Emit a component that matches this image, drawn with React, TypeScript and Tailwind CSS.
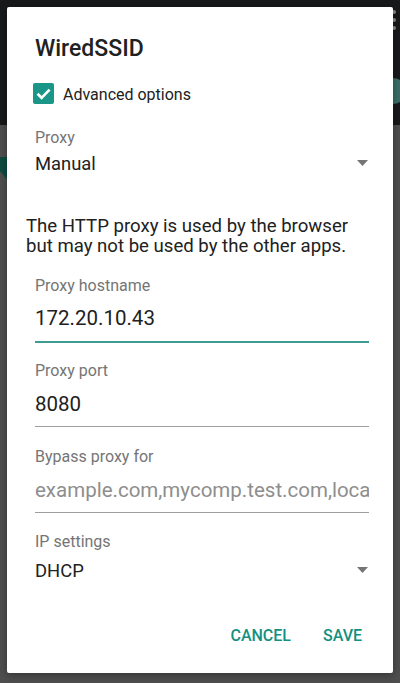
import React from "react";

const Caret = () => (
  <svg width="11" height="6" viewBox="0 0 11 6" className="shrink-0">
    <polygon points="0,0 11,0 5.5,6" fill="#757575" />
  </svg>
);

export default function App() {
  return (
    <div
      className="relative w-[400px] h-[683px] overflow-hidden flex flex-col"
      style={{ fontFamily: "Roboto, 'Noto Sans', sans-serif" }}
    >
      <div className="h-[125px] bg-[#18191b] shrink-0" />
      <div className="flex-1 bg-[#4e4e4e]" />

      {/* background decorations behind the dialog */}
      <div className="absolute left-[392px] top-[10px] flex flex-col gap-[4px]">
        <div className="w-[4px] h-[4px] rounded-full bg-[#8a8a8a]" />
        <div className="w-[4px] h-[4px] rounded-full bg-[#8a8a8a]" />
        <div className="w-[4px] h-[4px] rounded-full bg-[#8a8a8a]" />
      </div>
      <div className="absolute left-[380px] top-[78px] w-[26px] h-[26px] rounded-full bg-[#3b6e67]" />
      <svg className="absolute left-0 top-[155px]" width="10" height="30" viewBox="0 0 10 30">
        <polygon points="0,2 10,2 10,28 0,16" fill="#0e4a40" />
      </svg>

      {/* dialog */}
      <div className="absolute left-[7px] top-[7px] w-[386px] h-[666px] bg-white rounded-[2px] shadow-[0_2px_8px_rgba(0,0,0,0.35)] flex flex-col pl-[28px] pr-[24px] pt-[28px]">
        <div className="text-[23px] leading-[28px] font-medium text-[#212121]">WiredSSID</div>

        <div className="mt-[20px] h-[24px] flex items-start -ml-[2px] gap-[9px]">
          <div className="w-[21px] h-[21px] rounded-[2px] bg-[#1a9688] flex items-center justify-center">
            <svg width="21" height="21" viewBox="0 0 21 21">
              <path d="M4.5 10.8 L8.6 14.8 L16.6 6.6" fill="none" stroke="#ffffff" strokeWidth="2.6" />
            </svg>
          </div>
          <div className="text-[16px] leading-[24px] text-[#212121]">Advanced options</div>
        </div>

        <div className="mt-[21px] text-[16px] leading-[20px] text-[#757575]">Proxy</div>
        <div className="mt-[4px] h-[24px] flex items-center justify-between">
          <span className="text-[18.4px] leading-[24px] text-[#212121]">Manual</span>
          <span className="mr-[1px] -mt-[3px]">
            <Caret />
          </span>
        </div>

        <div className="mt-[41px] -ml-[9px] text-[18.6px] leading-[19.5px] text-[#212121]">
          The HTTP proxy is used by the browser but may not be used by the other apps.
        </div>

        <div className="mt-[20px] text-[16px] leading-[20px] text-[#757575]">Proxy hostname</div>
        <div className="mt-[10px] pb-[11px] border-b-2 border-[#3f9a91] text-[20.5px] leading-[24px] text-[#212121]">
          172.20.10.43
        </div>

        <div className="mt-[18px] text-[16px] leading-[20px] text-[#757575]">Proxy port</div>
        <div className="mt-[11px] pb-[10px] border-b border-[#9e9e9e] text-[20.5px] leading-[24px] text-[#212121]">
          8080
        </div>

        <div className="mt-[20px] text-[16px] leading-[20px] text-[#757575]">Bypass proxy for</div>
        <div className="mt-[11px] pb-[10px] border-b border-[#9e9e9e] text-[20.5px] leading-[24px] text-[#8e8e8e] whitespace-nowrap overflow-hidden">
          example.com,mycomp.test.com,localhost
        </div>

        <div className="mt-[19px] text-[16px] leading-[20px] text-[#757575]">IP settings</div>
        <div className="mt-[7px] h-[24px] flex items-center justify-between">
          <span className="text-[18.4px] leading-[24px] text-[#212121]">DHCP</span>
          <span className="mr-[1px] -mt-[3px]">
            <Caret />
          </span>
        </div>

        <div className="mt-[43px] flex justify-end gap-[32px] pr-[7px]">
          <span className="text-[16px] leading-[20px] font-medium text-[#13907f]">CANCEL</span>
          <span className="text-[16px] leading-[20px] font-medium text-[#13907f]">SAVE</span>
        </div>
      </div>
    </div>
  );
}
